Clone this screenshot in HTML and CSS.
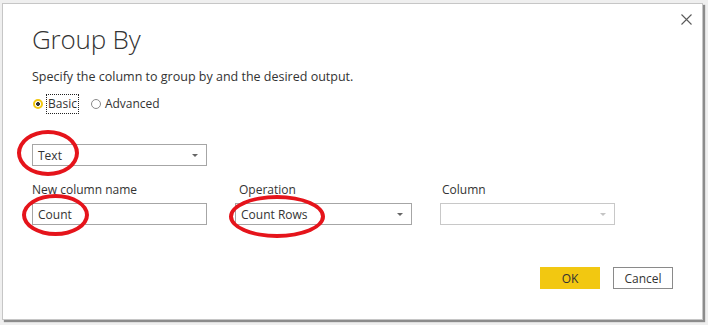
FILE: index.html
```html
<!DOCTYPE html>
<html lang="en">
<head>
  <meta charset="UTF-8">
  <meta name="viewport" content="width=device-width, initial-scale=1.0">
  <title>Group By</title>
  <link rel="stylesheet" href="styles.css">
</head>
<body>

<div class="dialog">
  <button class="close" aria-label="Close">
    <svg width="11" height="11" viewBox="0 0 11 11">
      <path d="M0.5 0.5 L10.5 10.5 M10.5 0.5 L0.5 10.5" stroke="#5a5a5a" stroke-width="1.1" fill="none"/>
    </svg>
  </button>

  <h1 class="title">Group By</h1>
  <p class="subtitle">Specify the column to group by and the desired output.</p>

  <div class="radios">
    <label class="radio checked"><span class="dot"></span><span class="focus">Basic</span></label>
    <label class="radio"><span class="dot"></span><span>Advanced</span></label>
  </div>

  <div class="group-row">
    <div class="select">
      <span>Text</span>
      <span class="arrow"></span>
      <span class="mark mark-text"></span>
    </div>
  </div>

  <div class="fields">
    <div class="field">
      <label>New column name</label>
      <div class="input">
        <span>Count</span>
        <span class="mark mark-count"></span>
      </div>
    </div>
    <div class="field">
      <label>Operation</label>
      <div class="select">
        <span>Count Rows</span>
        <span class="arrow"></span>
        <span class="mark mark-op"></span>
      </div>
    </div>
    <div class="field">
      <label>Column</label>
      <div class="select disabled">
        <span></span>
        <span class="arrow"></span>
      </div>
    </div>
  </div>

  <div class="actions">
    <button class="btn primary">OK</button>
    <button class="btn">Cancel</button>
  </div>
</div>

</body>
</html>
```

FILE: styles.css
```css
* {
  margin: 0;
  padding: 0;
  box-sizing: border-box;
  font-family: 'Open Sans', 'Noto Sans', sans-serif;
}

body {
  background: #efefef;
  width: 708px;
  height: 325px;
  overflow: hidden;
}

.dialog {
  position: relative;
  margin: 3px 0 0 2px;
  width: 701px;
  height: 317px;
  background: #fff;
  border: 1px solid #c6c6c6;
  box-shadow: 2px 2px 1px #8c8c8c;
  padding: 0 29px;
  color: #333;
}

.close {
  position: absolute;
  top: 10px;
  right: 10px;
  background: none;
  border: none;
  width: 11px;
  height: 11px;
  display: flex;
}

.title {
  font-weight: 300;
  font-size: 26px;
  line-height: 32px;
  padding-top: 19px;
  color: #333;
  letter-spacing: -0.2px;
}

.subtitle {
  font-size: 12.5px;
  line-height: 17px;
  margin-top: 13px;
  color: #333;
}

.radios {
  display: flex;
  gap: 12px;
  margin-top: 10px;
  font-size: 12px;
  line-height: 18px;
}

.radio {
  display: flex;
  align-items: center;
  gap: 4px;
  color: #333;
}

.radio .dot {
  width: 10px;
  height: 10px;
  border-radius: 50%;
  border: 1.5px solid #8a8a8a;
  margin-left: 1px;
}

.radio.checked .dot {
  border: 2px solid #f2c811;
  background: radial-gradient(circle, #333 0 1.6px, #fff 2.2px);
}

.radio .focus {
  outline: 1px dotted #222;
  padding: 0 1px;
}

.group-row {
  margin-top: 31px;
  width: 175px;
}

.select,
.input {
  position: relative;
  display: flex;
  align-items: center;
  justify-content: space-between;
  height: 22px;
  border: 1px solid #a6a6a6;
  padding: 0 8px 0 5px;
  font-size: 12px;
  color: #333;
}

.arrow {
  width: 0;
  height: 0;
  border-left: 3px solid transparent;
  border-right: 3px solid transparent;
  border-top: 3px solid #666;
}

.select.disabled {
  border-color: #c8c8c8;
}

.select.disabled .arrow {
  border-top-color: #c4c4c4;
}

.fields {
  display: grid;
  grid-template-columns: 175px 177px 175px;
  column-gap: 28px;
  margin-top: 16px;
}

.field label {
  display: block;
  font-size: 12px;
  line-height: 16px;
  margin-bottom: 5px;
  color: #333;
}

.field:nth-child(2) label {
  padding-left: 4px;
}

.field:nth-child(3) label {
  padding-left: 2px;
}

.actions {
  display: flex;
  justify-content: flex-end;
  gap: 13px;
  margin-top: 42px;
}

.btn {
  width: 60px;
  height: 22px;
  font-size: 12px;
  color: #333;
  background: #fff;
  border: 1px solid #8a8a8a;
}

.btn.primary {
  background: #f2c811;
  border-color: #f2c811;
}

/* red annotation circles drawn over the screenshot */
.mark {
  position: absolute;
  border: 4px solid #e5141b;
  border-radius: 50%;
}

.mark-text {
  left: -16px;
  top: -15px;
  width: 62px;
  height: 46px;
}

.mark-count {
  left: -11px;
  top: -10px;
  width: 67px;
  height: 42px;
}

.mark-op {
  left: -7px;
  top: -9px;
  width: 96px;
  height: 43px;
}
```
